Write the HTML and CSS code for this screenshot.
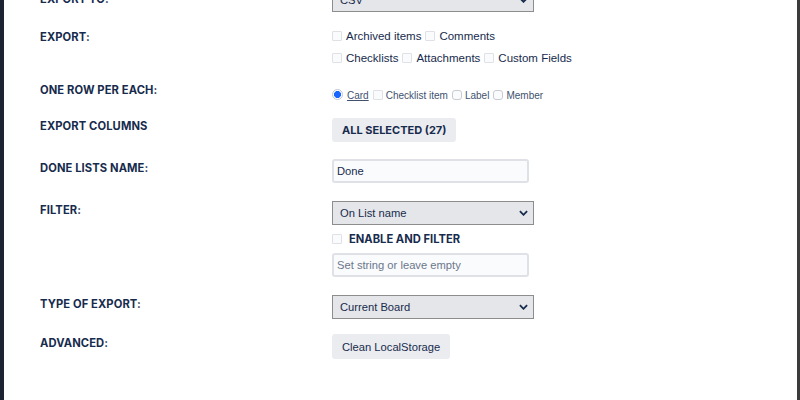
FILE: index.html
```html
<!DOCTYPE html>
<html>
<head>
<meta charset="utf-8">
<link rel="stylesheet" href="styles.css">
</head>
<body>
<div class="frame">
  <div class="form">
    <div class="row row-exportto">
      <div class="label">EXPORT TO:</div>
      <div class="ctrl">
        <div class="select"><span>CSV</span><svg class="chev" viewBox="0 0 10 6" width="9" height="6"><path d="M1 1l4 4 4-4" fill="none" stroke="#172b4d" stroke-width="2"/></svg></div>
      </div>
    </div>
    <div class="row row-export">
      <div class="label">EXPORT:</div>
      <div class="ctrl checks">
        <div class="line"><span class="cb"></span>Archived items<span class="cb gap"></span>Comments</div>
        <div class="line"><span class="cb"></span>Checklists<span class="cb gap"></span>Attachments<span class="cb gap"></span>Custom Fields</div>
      </div>
    </div>
    <div class="row row-per">
      <div class="label">ONE ROW PER EACH:</div>
      <div class="ctrl radios">
        <span class="radio"></span><span class="u">Card</span><span class="cb sm"></span>Checklist item<span class="cb sm round"></span>Label<span class="cb sm round"></span>Member
      </div>
    </div>
    <div class="row row-cols">
      <div class="label">EXPORT COLUMNS</div>
      <div class="ctrl"><button class="btn bold">ALL SELECTED (27)</button></div>
    </div>
    <div class="row row-done">
      <div class="label">DONE LISTS NAME:</div>
      <div class="ctrl"><div class="input">Done</div></div>
    </div>
    <div class="row row-filter">
      <div class="label">FILTER:</div>
      <div class="ctrl">
        <div class="select"><span>On List name</span><svg class="chev" viewBox="0 0 10 6" width="9" height="6"><path d="M1 1l4 4 4-4" fill="none" stroke="#172b4d" stroke-width="2"/></svg></div>
        <div class="enable"><span class="cb"></span><span class="enable-text">ENABLE AND FILTER</span></div>
        <div class="input placeholder">Set string or leave empty</div>
      </div>
    </div>
    <div class="row row-type">
      <div class="label">TYPE OF EXPORT:</div>
      <div class="ctrl">
        <div class="select"><span>Current Board</span><svg class="chev" viewBox="0 0 10 6" width="9" height="6"><path d="M1 1l4 4 4-4" fill="none" stroke="#172b4d" stroke-width="2"/></svg></div>
      </div>
    </div>
    <div class="row row-adv">
      <div class="label">ADVANCED:</div>
      <div class="ctrl"><button class="btn">Clean LocalStorage</button></div>
    </div>
  </div>
</div>
</body>
</html>
```
FILE: styles.css
```css
* { box-sizing: border-box; }
html, body { margin: 0; padding: 0; }
body {
  font-family: Inter, "Liberation Sans", Arial, sans-serif;
  color: #172b4d;
  background: #fff;
  overflow: hidden;
}
.frame {
  height: 400px;
  border-left: 4px solid #1e2333;
  border-right: 3px solid #3b3b3b;
  background: #fff;
  overflow: hidden;
}
.form {
  margin-top: -12px;
  padding-left: 36px;
}
.row {
  display: flex;
  align-items: flex-start;
}
.label {
  width: 292px;
  flex: none;
  font-size: 11.2px;
  font-weight: 700;
  letter-spacing: 0.1px;
  line-height: 14px;
}
.ctrl {
  font-family: "Liberation Sans", Arial, sans-serif;
  font-size: 11px;
}

.select {
  width: 202px;
  height: 24px;
  background: #e5e6e9;
  border: 1px solid #8d8d8d;
  display: flex;
  align-items: center;
  justify-content: space-between;
  padding: 0 5px 0 7px;
  font-size: 11.2px;
}
.chev { display: block; }

.cb {
  display: inline-block;
  width: 10px;
  height: 10px;
  border: 1px solid #dfe1e6;
  background: #fafbfc;
  border-radius: 1px;
  vertical-align: -1px;
  margin-right: 4px;
}
.cb.gap { margin-left: 4px; }
.cb.sm { width: 10px; height: 10px; margin-right: 3px; margin-left: 4px; }
.cb.round { border-radius: 3px; border-color: #c8cbd2; }

.row-exportto .label { padding-top: 4px; }
.row-export { margin-top: 17px; }
.row-export .label { padding-top: 0; margin-top: 1px; }
.checks .line { height: 22px; line-height: 14px; font-size: 11.5px; }

.row-per { margin-top: 10px; }
.row-per .label { padding-top: 0; }
.radios {
  margin-top: 6px;
  font-size: 10px;
  color: #42526e;
  line-height: 14px;
}
.radio {
  display: inline-block;
  width: 11px;
  height: 11px;
  border-radius: 50%;
  border: 1px solid #c1c7d0;
  background: radial-gradient(circle, #1967ff 0 3.2px, #fff 3.8px);
  vertical-align: -1px;
  margin-right: 4px;
}
.u { text-decoration: underline; }

.row-cols { margin-top: 15px; }
.row-cols .label { padding-top: 1px; }
.btn {
  font-family: inherit;
  color: #172b4d;
  background: #ebecf0;
  border: none;
  border-radius: 3px;
  font-size: 11.2px;
  height: 25px;
  padding: 0 10px;
  margin: 0;
}
.btn.bold {
  font-family: Inter, "Liberation Sans", Arial, sans-serif;
  font-weight: 700;
  font-size: 11px;
  height: 24px;
}

.row-done { margin-top: 17px; }
.row-done .label { padding-top: 2px; }
.input {
  width: 197px;
  height: 24px;
  border: 2px solid #dfe1e6;
  background: #fafbfc;
  border-radius: 3px;
  font-size: 11.2px;
  padding: 0 3px;
  line-height: 20px;
}
.input.placeholder { color: #6b778c; }

.row-filter { margin-top: 18px; }
.row-filter .label { padding-top: 2px; }
.enable {
  height: 28px;
  display: flex;
  align-items: center;
  padding-bottom: 1px;
}
.enable .cb { margin-right: 7px; }
.enable-text {
  font-family: Inter, "Liberation Sans", Arial, sans-serif;
  font-size: 11.2px;
  font-weight: 700;
}

.row-type { margin-top: 18px; }
.row-type .label { padding-top: 2px; }

.row-adv { margin-top: 15px; }
.row-adv .label { padding-top: 2px; }
```
